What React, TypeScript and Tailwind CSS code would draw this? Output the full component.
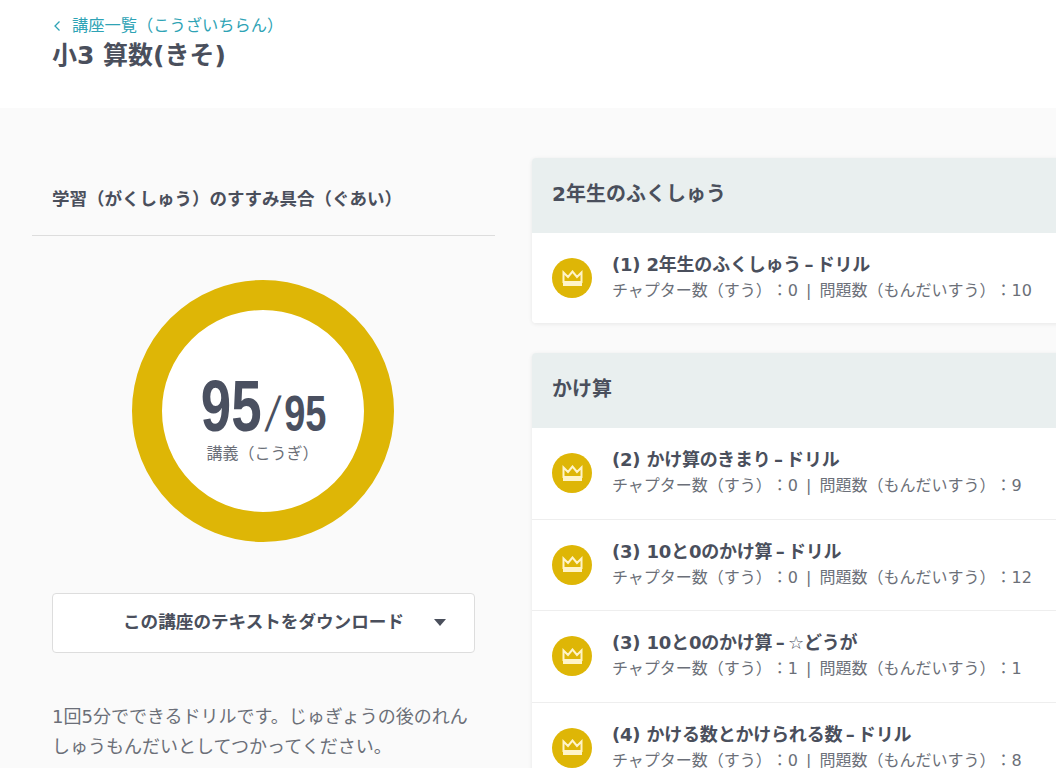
const FONT = 'font-["DejaVu_Sans","Noto_Sans_CJK_JP",sans-serif] [text-spacing-trim:space-all]'

type Lesson = { title: string; chapters: number; problems: number }
type Section = { name: string; lessons: Lesson[] }

const sections: Section[] = [
  {
    name: '2年生のふくしゅう',
    lessons: [{ title: '(1) 2年生のふくしゅう\u2009–\u2009ドリル', chapters: 0, problems: 10 }],
  },
  {
    name: 'かけ算',
    lessons: [
      { title: '(2) かけ算のきまり\u2009–\u2009ドリル', chapters: 0, problems: 9 },
      { title: '(3) 10と0のかけ算\u2009–\u2009ドリル', chapters: 0, problems: 12 },
      { title: '(3) 10と0のかけ算\u2009–\u2009☆どうが', chapters: 1, problems: 1 },
      { title: '(4) かける数とかけられる数\u2009–\u2009ドリル', chapters: 0, problems: 8 },
    ],
  },
]

function Crown() {
  return (
    <div className="flex h-10 w-10 shrink-0 items-center justify-center rounded-full bg-[#deb606]">
      <svg width="21" height="17" viewBox="0 0 21 17" fill="none" stroke="#fff4c8" strokeWidth="2">
        <path d="M1.5 2.5 L6 7 L10.5 1.5 L15 7 L19.5 2.5 V12 H1.5 Z" />
        <path d="M1 14.5 H20" strokeWidth="3" />
      </svg>
    </div>
  )
}

function LessonRow({ lesson }: { lesson: Lesson }) {
  return (
    <div className="flex h-[91.5px] items-center gap-5 border-b border-[#eeeeee] bg-white px-5 last:h-[90px] last:border-0">
      <Crown />
      <div className="pt-[2px]">
        <p className="text-[18px] leading-[24px] font-bold tracking-[-0.2px] text-[#4a4f5c]">{lesson.title}</p>
        <p className="text-[16px] leading-[28px] whitespace-nowrap text-[#6b6f78] [word-spacing:3px]">
          チャプター数（すう）：{lesson.chapters} | 問題数（もんだいすう）：{lesson.problems}
        </p>
      </div>
    </div>
  )
}

export default function App() {
  return (
    <div className={`h-[768px] w-[1056px] overflow-hidden bg-[#fafafa] ${FONT}`}>
      <header className="h-[108px] bg-white pt-[14px] pl-[52px]">
        <a className="flex items-center gap-[10px] text-[16.25px] leading-6 text-[#2ea3b5]">
          <svg width="10" height="12" viewBox="0 0 10 12" fill="none" stroke="#2ea3b5" strokeWidth="1.3">
            <path d="M7.5 1.5 L3 6 L7.5 10.5" />
          </svg>
          講座一覧（こうざいちらん）
        </a>
        <h1 className="text-[25px] leading-[35px] font-bold text-[#4a4f5c]">小3 算数(きそ)</h1>
      </header>

      <main className="flex items-start gap-[37px] pt-[50px] pl-8">
        <aside className="w-[463px] shrink-0">
          <h2 className="border-b border-[#dddddd] pt-[28px] pb-[23px] pl-5 text-[17.5px] leading-[26px] font-bold text-[#4a4f5c]">
            学習（がくしゅう）のすすみ具合（ぐあい）
          </h2>
          <div className="mt-[44px] flex justify-center pr-[2px]">
            <div className="flex h-[262px] w-[262px] flex-col items-center justify-center rounded-full border-[30px] border-[#deb606] bg-white">
              <div className='mt-[8px] flex origin-center translate-x-[1px] translate-y-[5px] scale-x-[0.76] items-baseline font-["Liberation_Sans",sans-serif] font-bold text-[#4a5060]'>
                <span className="text-[72px] leading-[70px]">95</span>
                <span className="mx-2 inline-block -skew-x-[14deg] text-[49px] leading-[70px] font-normal">/</span>
                <span className="text-[50px] leading-[70px]">95</span>
              </div>
              <p className="text-[16px] leading-5 text-[#6b6f78]">講義（こうぎ）</p>
            </div>
          </div>
          <div className="mx-5 mt-[51px]">
            <button className="flex h-[60px] w-full items-center rounded border border-[#dddddd] bg-white pr-[28px] pb-[2px] pl-[70px] text-[#4a4f5c]">
              <span className="flex-1 text-left text-[17.6px] font-bold">この講座のテキストをダウンロード</span>
              <svg width="12" height="7" viewBox="0 0 12 7" fill="#4a4f5c">
                <path d="M0 0 H12 L6 7 Z" />
              </svg>
            </button>
            <p className="mt-[49px] text-[18px] leading-[30px] text-[#6b6f78]">
              1回5分でできるドリルです。じゅぎょうの後のれんしゅうもんだいとしてつかってください。
            </p>
          </div>
        </aside>

        <div className="flex w-[560px] shrink-0 flex-col gap-[30px]">
          {sections.map((s) => (
            <section key={s.name} className="overflow-hidden rounded shadow-[0_1px_4px_rgba(0,0,0,0.08)]">
              <h3 className="flex h-[75px] items-center bg-[#e9efef] px-5 pb-[3px] text-[20px] font-bold text-[#4a4f5c]">
                {s.name}
              </h3>
              {s.lessons.map((l) => (
                <LessonRow key={l.title} lesson={l} />
              ))}
            </section>
          ))}
        </div>
      </main>
    </div>
  )
}
